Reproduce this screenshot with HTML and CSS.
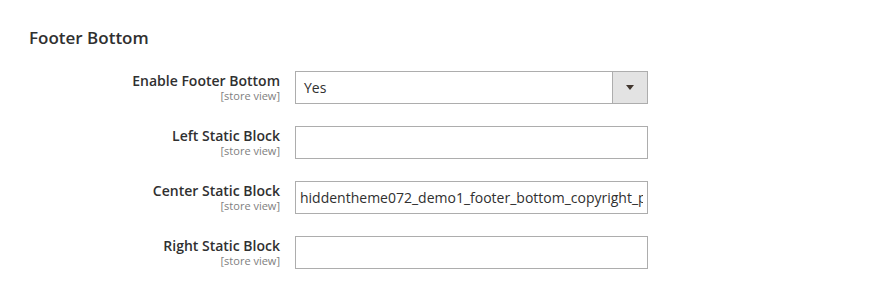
FILE: index.html
```html
<!DOCTYPE html>
<html>
<head>
<meta charset="utf-8">
<link rel="stylesheet" href="styles.css">
</head>
<body>
<section class="section">
  <h2 class="title">Footer Bottom</h2>
  <div class="rows">
    <div class="row">
      <div class="label"><span class="name">Enable Footer Bottom</span><span class="scope">[store view]</span></div>
      <div class="select">
        <span class="select-value">Yes</span>
        <span class="select-btn"><span class="caret"></span></span>
      </div>
    </div>
    <div class="row">
      <div class="label"><span class="name">Left Static Block</span><span class="scope">[store view]</span></div>
      <input class="input" type="text" value="">
    </div>
    <div class="row">
      <div class="label"><span class="name">Center Static Block</span><span class="scope">[store view]</span></div>
      <input class="input" type="text" value="hiddentheme072_demo1_footer_bottom_copyright_p">
    </div>
    <div class="row">
      <div class="label"><span class="name">Right Static Block</span><span class="scope">[store view]</span></div>
      <input class="input" type="text" value="">
    </div>
  </div>
</section>
</body>
</html>
```

FILE: styles.css
```css
html, body {
  margin: 0;
  padding: 0;
  background: #ffffff;
}
body {
  font-family: "Open Sans", "Noto Sans", sans-serif;
  color: #303030;
}
.section {
  padding: 26px 0 0 29px;
}
.title {
  margin: 0;
  font-size: 17px;
  font-weight: 600;
  line-height: 23px;
  color: #303030;
}
.rows {
  display: flex;
  flex-direction: column;
  gap: 22px;
  margin-top: 22px;
}
.row {
  display: grid;
  grid-template-columns: 251px 353px;
  column-gap: 15px;
  align-items: start;
}
.label {
  display: flex;
  flex-direction: column;
  align-items: flex-end;
  text-align: right;
  padding-top: 1px;
}
.name {
  font-size: 14px;
  font-weight: 600;
  line-height: 18px;
}
.scope {
  font-size: 11px;
  line-height: 10px;
  padding-top: 1px;
  color: #808080;
}
.select {
  box-sizing: border-box;
  height: 33px;
  border: 1px solid #adadad;
  display: flex;
  align-items: stretch;
  background: #fff;
}
.select-value {
  flex: 1;
  padding-left: 8px;
  font-size: 14px;
  line-height: 31px;
  color: #303030;
}
.select-btn {
  width: 34px;
  border-left: 1px solid #adadad;
  background: #e3e3e3;
  display: flex;
  align-items: center;
  justify-content: center;
}
.caret {
  width: 0;
  height: 0;
  border-left: 4px solid transparent;
  border-right: 4px solid transparent;
  border-top: 5px solid #41362f;
}
.input {
  box-sizing: border-box;
  width: 353px;
  height: 33px;
  margin: 0;
  border: 1px solid #adadad;
  border-radius: 0;
  padding: 0 4px 0 4px;
  font-family: "Open Sans", "Noto Sans", sans-serif;
  font-size: 14px;
  color: #303030;
  background: #fff;
  outline: none;
}
```
